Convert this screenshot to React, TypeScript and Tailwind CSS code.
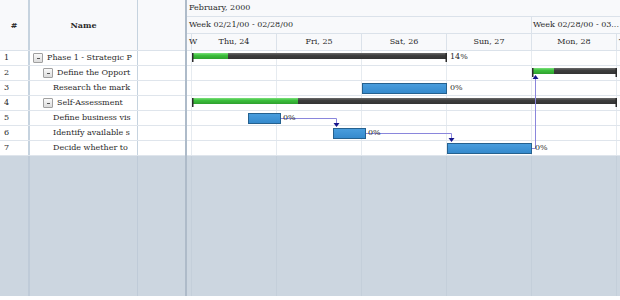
import React from "react";

const rows = [
  { n: 1, name: "Phase 1 - Strategic P", level: 0, btn: true },
  { n: 2, name: "Define the Opport", level: 1, btn: true },
  { n: 3, name: "Research the mark", level: 2, btn: false },
  { n: 4, name: "Self-Assessment", level: 1, btn: true },
  { n: 5, name: "Define business vis", level: 2, btn: false },
  { n: 6, name: "Identify available s", level: 2, btn: false },
  { n: 7, name: "Decide whether to", level: 2, btn: false },
];

const dayCols = [
  { w: "w-[5px]", label: "W", left: true },
  { w: "w-[85px]", label: "Thu, 24" },
  { w: "w-[85px]", label: "Fri, 25" },
  { w: "w-[85px]", label: "Sat, 26" },
  { w: "w-[85px]", label: "Sun, 27" },
  { w: "w-[85px]", label: "Mon, 28" },
  { w: "w-[85px]", label: "T", left: true },
];

function Btn() {
  return (
    <span className="inline-flex items-center justify-center w-[10px] h-[10px] border border-[#a0a0a0] rounded-[1px] bg-gradient-to-b from-[#fafafa] to-[#dcdcdc] shrink-0">
      <span className="block w-[3px] h-[1px] bg-[#555]" />
    </span>
  );
}

function Summary({ x1, x2, g, y }: { x1: number; x2: number; g: number; y: number }) {
  return (
    <g>
      <rect x={x1} y={y} width={x2 - x1} height={6} fill="url(#dark)" />
      <rect x={x1} y={y} width={g - x1} height={6} fill="url(#green)" />
      <rect x={x1} y={y} width={1.5} height={9} fill="#2b2b2b" />
      <rect x={x2 - 1.5} y={y} width={1.5} height={9} fill="#2b2b2b" />
    </g>
  );
}

function Task({ x1, x2, y }: { x1: number; x2: number; y: number }) {
  return <rect x={x1 + 0.5} y={y + 0.5} width={x2 - x1 - 1} height={10} fill="url(#blue)" stroke="#25618f" strokeWidth={1} />;
}

function Label({ x, y, t }: { x: number; y: number; t: string }) {
  return (
    <span className="absolute leading-[10px] text-[8px] text-[#2a2a2a]" style={{ left: x, top: y }}>
      {t}
    </span>
  );
}

export default function App() {
  return (
    <div
      className="w-[620px] h-[300px] bg-white overflow-hidden text-[8px] text-[#2a2a2a]"
      style={{ fontFamily: '"DejaVu Serif", serif' }}
    >
      <div className="flex h-[296px]">
        {/* Left grid */}
        <div className="w-[185px] flex flex-col shrink-0">
          <div className="flex h-[51px] border-b border-[#dbe2ea] bg-[#f8f9fb]">
            <div className="w-[30px] border-r-2 border-[#c6d3df] flex items-center justify-center font-bold">#</div>
            <div className="w-[108px] border-r border-[#c6d3df] flex items-center justify-center font-bold">Name</div>
            <div className="w-[47px]" />
          </div>
          {rows.map((r) => (
            <div key={r.n} className="flex h-[15px] border-b border-[#dfe5ec] bg-white">
              <div className="w-[30px] border-r-2 border-[#c6d3df] pl-[4px] flex items-center">{r.n}</div>
              <div className="w-[108px] border-r border-[#c6d3df] flex items-center pl-[3px] pr-[2px]">
                <div className="flex items-center whitespace-nowrap w-full" style={{ paddingLeft: r.level * 10 }}>
                  {r.btn ? <Btn /> : null}
                  <span className={r.btn ? "ml-[4px]" : "ml-[0px]"}>{r.name}</span>
                </div>
              </div>
              <div className="w-[47px]" />
            </div>
          ))}
          <div className="flex flex-1 bg-[#ccd6e0]">
            <div className="w-[30px] border-r-2 border-[#bfcbd8]" />
            <div className="w-[108px] border-r border-[#bfcbd8]" />
            <div className="w-[47px]" />
          </div>
        </div>
        {/* Splitter */}
        <div className="w-[2px] bg-[#aebbc9] shrink-0" />
        {/* Right gantt */}
        <div className="flex-1 flex flex-col overflow-hidden">
          <div className="h-[17px] border-b border-[#dbe2ea] bg-[#f8f9fb] flex items-center pl-[2px] whitespace-nowrap">
            February, 2000
          </div>
          <div className="h-[17px] border-b border-[#dbe2ea] bg-[#f8f9fb] flex whitespace-nowrap">
            <div className="w-[345px] border-r border-[#dbe2ea] flex items-center pl-[2px] shrink-0">Week 02/21/00 - 02/28/00</div>
            <div className="w-[88px] flex items-center pl-[1px] shrink-0">Week 02/28/00 - 03...</div>
          </div>
          <div className="h-[17px] border-b border-[#dbe2ea] bg-[#f8f9fb] flex whitespace-nowrap">
            {dayCols.map((d, i) => (
              <div
                key={i}
                className={`${d.w} shrink-0 border-r border-[#dbe2ea] flex items-center ${d.left ? "pl-[2px] relative z-10" : "justify-center"}`}
              >
                {d.label}
              </div>
            ))}
          </div>
          <div className="relative flex-1 flex flex-col">
            {rows.map((r) => (
              <div key={r.n} className="flex h-[15px] border-b border-[#dfe5ec] bg-white">
                {dayCols.map((d, i) => (
                  <div key={i} className={`${d.w} shrink-0 border-r border-[#e6ebf0]`} />
                ))}
              </div>
            ))}
            <div className="flex flex-1 bg-[#ccd6e0]">
              {dayCols.map((d, i) => (
                <div key={i} className={`${d.w} shrink-0 border-r border-[#c4cfda]`} />
              ))}
            </div>
            <svg className="absolute left-0 top-0" width={433} height={110}>
              <defs>
                <linearGradient id="dark" x1="0" y1="0" x2="0" y2="1">
                  <stop offset="0" stopColor="#6a6a6a" />
                  <stop offset="0.4" stopColor="#3e3e3e" />
                  <stop offset="1" stopColor="#333" />
                </linearGradient>
                <linearGradient id="green" x1="0" y1="0" x2="0" y2="1">
                  <stop offset="0" stopColor="#7be07b" />
                  <stop offset="0.4" stopColor="#3cbf3c" />
                  <stop offset="1" stopColor="#2ea02e" />
                </linearGradient>
                <linearGradient id="blue" x1="0" y1="0" x2="0" y2="1">
                  <stop offset="0" stopColor="#4a9ede" />
                  <stop offset="1" stopColor="#3489cc" />
                </linearGradient>
              </defs>
              <Summary x1={5} x2={260} g={41} y={2} />
              <Summary x1={345} x2={430} g={367} y={17} />
              <Task x1={175} x2={260} y={32} />
              <Summary x1={5} x2={430} g={111} y={47} />
              <Task x1={61} x2={94} y={62} />
              <Task x1={146} x2={179} y={77} />
              <Task x1={260} x2={345} y={92} />
              <g fill="none" stroke="#8a86dc" strokeWidth={1}>
                <path d="M94 67.5 H149.5 V72" />
                <path d="M179 82.5 H264.5 V87" />
                <path d="M345 97.5 H348.5 V27" />
              </g>
              <g fill="#15158c">
                <path d="M146.5 72 L152.5 72 L149.5 76 Z" />
                <path d="M261.5 87 L267.5 87 L264.5 91 Z" />
                <path d="M345.5 28 L351.5 28 L348.5 24 Z" />
              </g>
            </svg>
            <Label x={263} y={1} t="14%" />
            <Label x={263} y={32} t="0%" />
            <Label x={96} y={62} t="0%" />
            <Label x={181} y={77} t="0%" />
            <Label x={348} y={92} t="0%" />
          </div>
        </div>
      </div>
    </div>
  );
}
